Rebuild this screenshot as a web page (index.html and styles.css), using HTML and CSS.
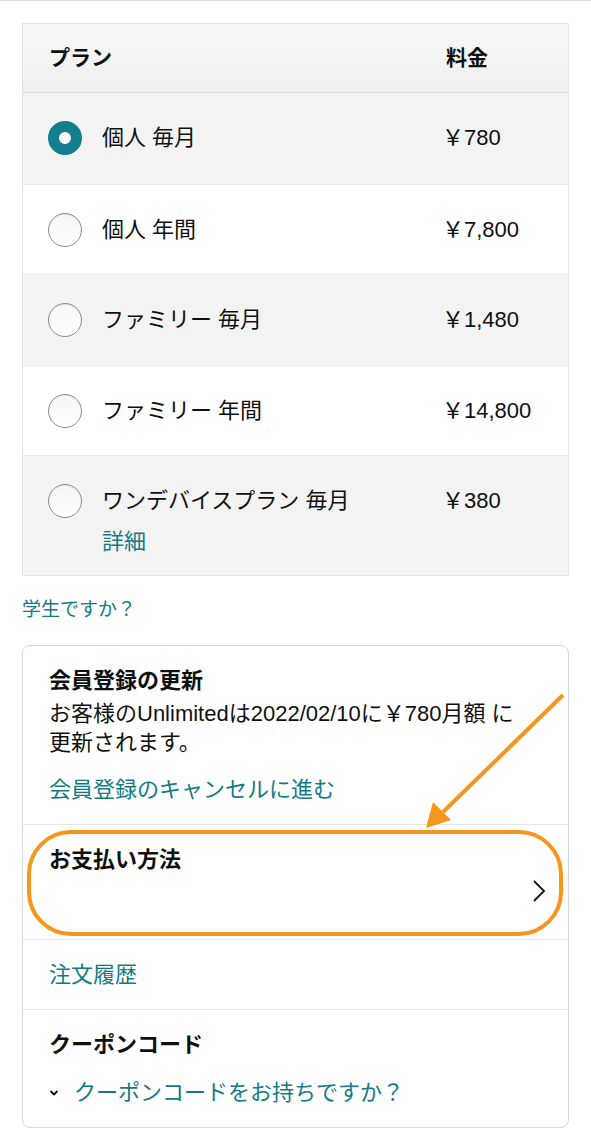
FILE: index.html
```html
<!DOCTYPE html>
<html lang="ja">
<head>
<meta charset="utf-8">
<title>プラン</title>
<link rel="stylesheet" href="styles.css">
</head>
<body>
<div class="page">
  <div class="topline"></div>
  <div class="plans">
    <div class="row head">
      <div class="c-plan">プラン</div>
      <div class="c-price">料金</div>
    </div>
    <div class="row gray">
      <div class="c-plan"><span class="radio on"></span><span>個人 毎月</span></div>
      <div class="c-price">￥780</div>
    </div>
    <div class="row">
      <div class="c-plan"><span class="radio"></span><span>個人 年間</span></div>
      <div class="c-price">￥7,800</div>
    </div>
    <div class="row gray">
      <div class="c-plan"><span class="radio"></span><span>ファミリー 毎月</span></div>
      <div class="c-price">￥1,480</div>
    </div>
    <div class="row">
      <div class="c-plan"><span class="radio"></span><span>ファミリー 年間</span></div>
      <div class="c-price">￥14,800</div>
    </div>
    <div class="row gray last">
      <div class="c-plan"><span class="radio"></span>
        <div class="stack"><span>ワンデバイスプラン 毎月</span><a class="link detail">詳細</a></div>
      </div>
      <div class="c-price">￥380</div>
    </div>
  </div>

  <a class="link student">学生ですか？</a>

  <div class="card">
    <div class="sec">
      <div class="h">会員登録の更新</div>
      <div class="body">お客様のUnlimitedは2022/02/10に￥780月額 に<br>更新されます。</div>
      <a class="link cancel">会員登録のキャンセルに進む</a>
    </div>
    <div class="sec pay">
      <div class="h">お支払い方法</div>
      <svg class="chev" width="14" height="24" viewBox="0 0 14 24"><path d="M2 2 L12 12 L2 22" fill="none" stroke="#0f1111" stroke-width="1.8"/></svg>
    </div>
    <div class="sec">
      <a class="link">注文履歴</a>
    </div>
    <div class="sec">
      <div class="h">クーポンコード</div>
      <div class="coupon">
        <svg class="chev-d" width="10" height="8" viewBox="0 0 10 8"><path d="M1.5 2 L5 5.5 L8.5 2" fill="none" stroke="#0f1111" stroke-width="1.8"/></svg>
        <a class="link">クーポンコードをお持ちですか？</a>
      </div>
    </div>
  </div>

  <svg class="annot" width="591" height="1130" viewBox="0 0 591 1130">
    <rect x="29" y="832" width="532" height="102" rx="42" ry="42" fill="none" stroke="#f7961c" stroke-width="4"/>
    <line x1="563" y1="695" x2="443" y2="812" stroke="#f7961c" stroke-width="4"/>
    <polygon points="426,828 433,802 451,820" fill="#f7961c"/>
  </svg>
</div>
</body>
</html>
```

FILE: styles.css
```css
* { box-sizing: border-box; }
html, body { margin: 0; padding: 0; background: #fff; }
body {
  font-family: "Liberation Sans", "Noto Sans CJK JP", sans-serif;
  color: #0f1111;
  font-size: 22px;
  line-height: 30px;
}
.page { position: relative; width: 591px; height: 1130px; overflow: hidden; }
.topline { height: 1px; background: #d8d8d8; }

.plans {
  margin: 22px 22px 0 22px;
  border: 1px solid #e3e3e3;
}
.row {
  display: grid;
  grid-template-columns: 1fr 122px;
  align-items: start;
  height: 90.5px;
  padding-top: 30px;
  border-top: 1px solid #e8e8e8;
  background: #fff;
}
.row.gray { background: #f3f3f3; }
.row.head {
  height: 69px;
  padding-top: 19px;
  border-top: none;
  border-bottom: 1px solid #dadada;
  background: linear-gradient(#f8f8f8, #efefef);
  font-weight: bold;
  font-size: 21px;
}
.row.head + .row { border-top: none; }
.row.last { height: 120px; }
.c-plan { display: flex; align-items: flex-start; padding-left: 25px; gap: 20px; }
.row.head .c-plan { padding-left: 26px; }
.c-price { margin-left: -4px; }
.row.head .c-price { margin-left: 0; }
.stack { display: flex; flex-direction: column; gap: 11px; }

.radio {
  flex: none;
  width: 34px; height: 34px;
  margin-top: -2px;
  border-radius: 50%;
  border: 1.5px solid #8d8d8d;
  background: linear-gradient(#f6f6f6, #ffffff);
  box-shadow: inset 0 1px 1px rgba(0,0,0,0.08);
}
.radio.on {
  border: 11px solid #137f8e;
  background: #fff;
  box-shadow: none;
}

.link { color: #127b86; text-decoration: none; }
.student {
  display: block;
  margin: 19px 0 0 22px;
  font-size: 19px;
  line-height: 30px;
}

.card {
  margin: 20px 22px 0 22px;
  border: 1px solid #d5d9d9;
  border-radius: 8px;
  overflow: hidden;
}
.sec {
  padding: 20px 26px 19px 26px;
  border-top: 1px solid #e7e7e7;
}
.sec:first-child { border-top: none; }
.h { font-weight: bold; font-size: 22px; line-height: 30px; }
.body { line-height: 29px; margin-top: 3px; }
.cancel { display: block; margin-top: 18px; }
.pay {
  position: relative;
  height: 115px;
  display: flex;
  justify-content: space-between;
  align-items: flex-start;
}
.chev { margin-top: 34px; margin-right: -4px; }
.coupon { display: flex; align-items: center; gap: 15px; margin-top: 18px; }
.chev-d { flex: none; }

.annot { position: absolute; left: 0; top: 0; pointer-events: none; }
```
